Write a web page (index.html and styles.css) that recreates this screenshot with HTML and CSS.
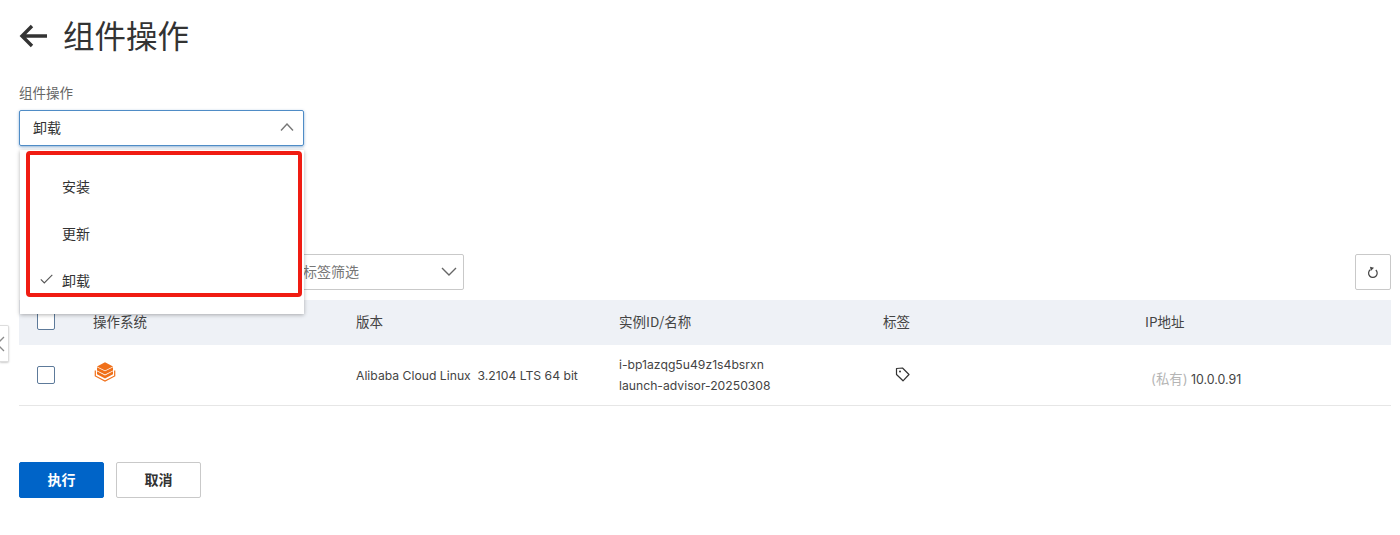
FILE: index.html
```html
<!DOCTYPE html>
<html lang="zh-CN">
<head>
<meta charset="utf-8">
<title>组件操作</title>
<link rel="stylesheet" href="styles.css">
</head>
<body>
<div class="edge-tab"><svg class="edge-icon" width="9" height="16" viewBox="0 0 9 16"><path d="M8 1 1 8l7 7" fill="none" stroke="#8a8a8a" stroke-width="1.300"/></svg></div>
<main class="page">
  <header class="title-row">
    <svg class="back" width="28" height="24" viewBox="0 0 28 24"><path d="M28 12H3M13 2 3 12l10 10" fill="none" stroke="#333" stroke-width="3.400"/></svg>
    <h1>组件操作</h1>
  </header>
  <section class="field">
    <div class="label">组件操作</div>
    <div class="select open">
      <span>卸载</span>
      <svg width="14" height="8" viewBox="0 0 14 8"><path d="M1 7.500 7 1l6 6.500" fill="none" stroke="#777" stroke-width="1.400"/></svg>
    </div>
    <div class="menu">
      <div class="option">安装</div>
      <div class="option">更新</div>
      <div class="option">
        <svg class="tick" width="13" height="10" viewBox="0 0 13 10"><path d="M.8 5.300 4.300 9 12.300 .8" fill="none" stroke="#555" stroke-width="1.100"/></svg>
        卸载
      </div>
    </div>
    <div class="highlight"></div>
  </section>
  <div class="toolbar">
    <div class="filter-key"></div>
    <div class="filter-tag">
      <span>标签筛选</span>
      <svg width="16" height="9" viewBox="0 0 16 9"><path d="M1 1 8 8l7-7" fill="none" stroke="#666" stroke-width="1.400"/></svg>
    </div>
    <button class="refresh" aria-label="刷新">
      <svg width="12" height="13" viewBox="0 0 12 13"><path d="M8.800 4A4.300 4.300 0 1 1 3.200 3.800" fill="none" stroke="#444" stroke-width="1.200"/><path d="M3 .8 7 1.800 3.800 5z" fill="#444"/></svg>
    </button>
  </div>
  <div class="table">
    <div class="row head">
      <div class="cell check"><span class="box"></span></div>
      <div class="cell">操作系统</div>
      <div class="cell">版本</div>
      <div class="cell">实例ID/名称</div>
      <div class="cell">标签</div>
      <div class="cell">IP地址</div>
    </div>
    <div class="row body">
      <div class="cell check"><span class="box"></span></div>
      <div class="cell">
        <svg class="os" width="22" height="20" viewBox="0 0 22 20">
          <path d="M11 .3 19 4.400 11 8.500 3 4.400z" fill="#f0701a"/>
          <path d="M3 5.200 11 9.300l8-4.100v3.300L11 12.600 3 8.500z" fill="#f0701a"/>
          <path d="M3 9.300 11 13.400l8-4.100v3L11 16.400 3 12.300z" fill="#f0701a"/>
          <path d="M1.300 8.500V14L11 19l9.700-5V8.500" fill="none" stroke="#f0701a" stroke-width="1.200"/>
        </svg>
      </div>
      <div class="cell latin">Alibaba Cloud Linux&nbsp; 3.2104 LTS 64 bit</div>
      <div class="cell stack latin"><div>i-bp1azqg5u49z1s4bsrxn</div><div>launch-advisor-20250308</div></div>
      <div class="cell">
        <svg class="tag" width="15" height="15" viewBox="0 0 15 15"><path d="M1.500 1.500 7.500 1 14 7.500 8 13.800 1.500 7.500z" fill="none" stroke="#333" stroke-width="1.200" stroke-linejoin="round"/><circle cx="5" cy="4.600" r="1" fill="#333"/></svg>
      </div>
      <div class="cell ip latin"><span class="muted">(私有)</span> 10.0.0.91</div>
    </div>
  </div>
  <footer class="actions">
    <button class="btn primary">执行</button>
    <button class="btn">取消</button>
  </footer>
</main>
</body>
</html>
```
FILE: styles.css
```css
* { box-sizing: border-box; }
html, body { margin: 0; height: 100%; }
body {
  background: #fff;
  color: #333;
  font-family: "Noto Sans CJK SC", "Noto Sans", sans-serif;
  font-size: 14px;
  overflow: hidden;
  position: relative;
}
.latin {
  font-family: "Inter", "Noto Sans CJK SC", sans-serif;
  font-size: 12.200px;
  color: #444;
}
.page { padding: 0 9px 0 19px; }
.title-row {
  display: flex;
  align-items: center;
  gap: 16px;
  height: 72px;
}
.back { flex: none; }
h1 {
  margin: -4px 0 0;
  font-size: 31.500px;
  font-weight: 400;
  line-height: 72px;
  color: #333;
}
.field { position: relative; width: 285px; height: 182px; }
.label {
  height: 38px;
  padding-top: 10px;
  line-height: 20px;
  font-size: 13.500px;
  color: #666;
}
.select {
  height: 36px;
  display: flex;
  align-items: center;
  justify-content: space-between;
  padding: 0 9px 2px 13px;
  border: 1px solid #4f8cc6;
  border-radius: 2px;
  box-shadow: 0 1px 3px rgba(0, 80, 160, .45);
  color: #333;
}
.menu {
  position: absolute;
  top: 78px;
  left: 1px;
  right: 0;
  height: 164px;
  padding-top: 13px;
  background: #fff;
  box-shadow: 0 1px 4px rgba(0, 0, 0, .3);
  z-index: 2;
}
.option {
  position: relative;
  height: 47px;
  line-height: 47px;
  padding-left: 42px;
  color: #333;
}
.tick { position: absolute; left: 20px; top: 17px; }
.highlight {
  position: absolute;
  top: 79px;
  left: 7px;
  width: 276px;
  height: 146px;
  border: 4px solid #f01c12;
  border-radius: 4px;
  z-index: 3;
}
.toolbar {
  display: flex;
  align-items: stretch;
  height: 36px;
}
.filter-key { width: 271px; }
.filter-tag {
  width: 174px;
  display: flex;
  align-items: center;
  justify-content: space-between;
  padding: 0 6px 2px 12px;
  border: 1px solid #c9c9c9;
  border-radius: 2px;
  color: #777;
}
.refresh {
  margin-left: auto;
  width: 36px;
  padding: 0;
  display: flex;
  align-items: center;
  justify-content: center;
  background: #fff;
  border: 1px solid #c9c9c9;
  border-radius: 2px;
}
.table { margin-top: 10px; }
.row {
  display: grid;
  grid-template-columns: 74px 263px 263px 264px 262px 1fr;
  align-items: center;
}
.head { height: 45px; padding-bottom: 4px; background: #eef1f6; color: #444; font-size: 13.500px; }
.body { height: 61px; border-bottom: 1px solid #e6e6e6; }
.check { padding-left: 18px; }
.box {
  display: block;
  width: 18px;
  height: 18px;
  background: #fff;
  border: 1px solid #5d7a9a;
  border-radius: 2px;
}
.os { display: block; margin: -6px 0 0 1px; }
.stack { line-height: 21px; }
.tag { display: block; margin: -2px 0 0 12px; }
.ip { padding: 5px 0 0 6px; font-size: 12.400px; }
.muted { color: #b5b5b5; font-size: 13.400px; }
.actions {
  display: flex;
  gap: 12px;
  margin-top: 56px;
}
.btn {
  width: 85px;
  height: 36px;
  padding: 0 0 2px;
  font: 700 14px "Noto Sans CJK SC", sans-serif;
  color: #333;
  background: #fff;
  border: 1px solid #c9c9c9;
  border-radius: 2px;
}
.primary { background: #0064c8; border-color: #0064c8; color: #fff; }
.edge-tab {
  position: absolute;
  left: 0;
  top: 325px;
  width: 9px;
  height: 37px;
  background: #fff;
  border: 1px solid #ddd;
  border-left: 0;
  border-radius: 0 2px 2px 0;
  box-shadow: 0 1px 2px rgba(0, 0, 0, .2);
  overflow: hidden;
  z-index: 1;
}
.edge-icon { display: block; margin: 10px 0 0 -4px; }
```
